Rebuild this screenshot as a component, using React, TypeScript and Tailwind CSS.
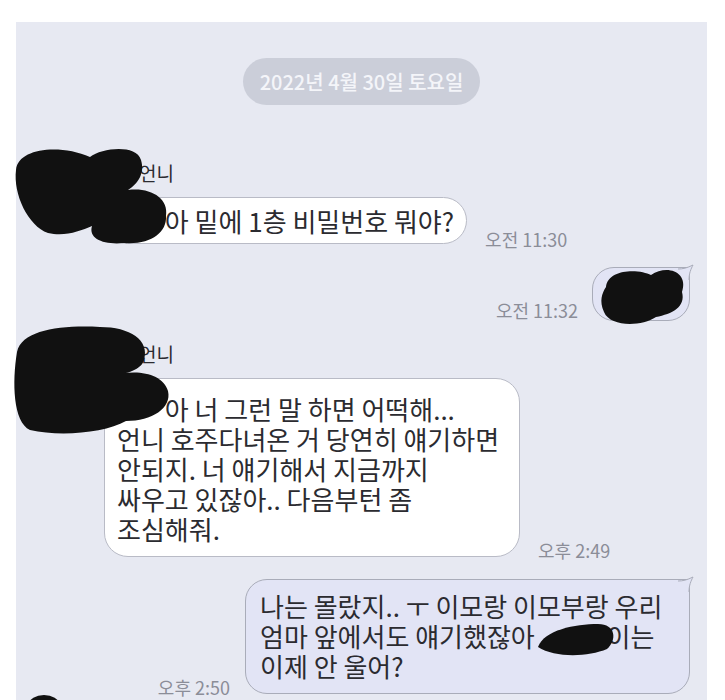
import React from 'react';

function Time({ text, className }: { text: string; className?: string }) {
  return (
    <span className={`shrink-0 whitespace-nowrap text-[18px] leading-[22px] text-[#8b8d98] ${className ?? ''}`}>
      {text}
    </span>
  );
}

function SentTail() {
  return (
    <svg className="absolute -right-[5px] -top-[4px] h-[16px] w-[16px]" viewBox="0 0 16 16">
      <path d="M0 5 C5 5 9 4 15 1 C13 5 11 9 11 16 L0 16 Z" fill="#e2e4f5" />
      <path d="M0 5 C5 5 9 4 15 1 C13 5 11 9 11 16" fill="none" stroke="#a9acb9" strokeWidth="1" />
    </svg>
  );
}

// names that sit under a redaction mark
function Hidden({ children }: { children: React.ReactNode }) {
  return <span className="text-transparent">{children}</span>;
}

export default function App() {
  return (
    <div className="relative min-h-[700px] overflow-hidden bg-white pt-[22px] font-['Noto_Sans_CJK_KR','Noto_Sans',sans-serif] text-[#2b2b30]">
      <div className="ml-[16px] h-[678px] w-[691px] overflow-hidden bg-[#e7e9f2]">
        {/* date divider */}
        <div className="mx-auto mt-[36px] flex h-[47px] w-[237px] items-center justify-center rounded-full bg-[#cbced9] text-[20px] font-medium text-[#f4f5f9]">
          2022년 4월 30일 토요일
        </div>

        {/* received 1 */}
        <div className="mt-[56px] pl-[88px]">
          <div className="text-[19px] leading-[24px]">
            <Hidden>ㅇㅇ</Hidden>언니
          </div>
          <div className="mt-[12px] flex items-end">
            <div className="whitespace-nowrap rounded-[24px] border border-[#b9bbc6] bg-white px-[12px] py-[7px] text-[26px] leading-[31px]">
              <Hidden>ㅇㅇ</Hidden>아 밑에 1층 비밀번호 뭐야?
            </div>
            <Time text="오전 11:30" className="mb-[-6px] ml-[18px]" />
          </div>
        </div>

        {/* sent 1 */}
        <div className="mt-[23px] flex items-end justify-end pr-[17px]">
          <Time text="오전 11:32" className="mr-[14px]" />
          <div className="relative flex h-[54px] w-[98px] items-center rounded-[22px] rounded-tr-[4px] border border-[#a9acb9] bg-[#e2e4f5] pl-[14px] text-[26px]">
            <Hidden>몰라</Hidden>
            <SentTail />
          </div>
        </div>

        {/* received 2 */}
        <div className="mt-[21px] pl-[88px]">
          <div className="text-[19px] leading-[24px]">
            <Hidden>ㅇㅇ</Hidden>언니
          </div>
          <div className="mt-[12px] flex items-end">
            <div className="w-[416px] whitespace-nowrap rounded-[24px] border border-[#b9bbc6] bg-white px-[12px] pb-[12px] pt-[15px] text-[26px] leading-[30px]">
              <Hidden>ㅇㅇ</Hidden>아 너 그런 말 하면 어떡해...
              <br />
              언니 호주다녀온 거 당연히 얘기하면
              <br />
              안되지. 너 얘기해서 지금까지
              <br />
              싸우고 있잖아.. 다음부턴 좀
              <br />
              조심해줘.
            </div>
            <Time text="오후 2:49" className="mb-[-4px] ml-[18px]" />
          </div>
        </div>

        {/* sent 2 */}
        <div className="mt-[22px] flex items-end justify-end pr-[17px]">
          <Time text="오후 2:50" className="mb-[-4px] mr-[15px]" />
          <div className="relative w-[445px] whitespace-nowrap rounded-[22px] rounded-tr-[4px] border border-[#a9acb9] bg-[#e2e4f5] pb-[12px] pl-[14px] pt-[11px] text-[26px] leading-[30px]">
            나는 몰랐지.. ㅜ 이모랑 이모부랑 우리
            <br />
            엄마 앞에서도 얘기했잖아<Hidden>ㅇㅇㅇ</Hidden>이는
            <br />
            이제 안 울어?
            <SentTail />
          </div>
        </div>
      </div>

      {/* redaction marks drawn over the screenshot */}
      <svg className="pointer-events-none absolute left-0 top-0 h-[700px] w-[725px]" viewBox="0 0 725 700">
        <g fill="#111">
          <path d="M16 170 C18 148 60 144 90 157 C102 148 136 144 141 160 C145 173 138 184 128 190 C150 187 169 198 166 216 C167 233 150 245 124 243 C104 245 88 239 92 226 C80 231 65 237 48 233 C28 226 13 194 16 170 Z" />
          <path d="M17 352 C22 330 60 325 100 327 C130 327 150 340 144 360 C141 370 128 373 110 377 C132 368 163 372 168 391 C172 408 152 421 126 421 C105 433 60 437 30 430 C13 422 12 382 17 352 Z" />
          <path d="M606 287 C608 268 640 269 651 275 C667 264 689 272 682 292 C686 307 672 314 656 317 C641 327 610 327 604 312 C599 301 602 293 606 287 Z" />
          <path d="M538 647 C544 630 575 624 598 624 C616 624 617 640 607 649 C588 657 555 658 538 647 Z" />
          <ellipse cx="44" cy="704" rx="15" ry="9" />
        </g>
      </svg>
    </div>
  );
}
